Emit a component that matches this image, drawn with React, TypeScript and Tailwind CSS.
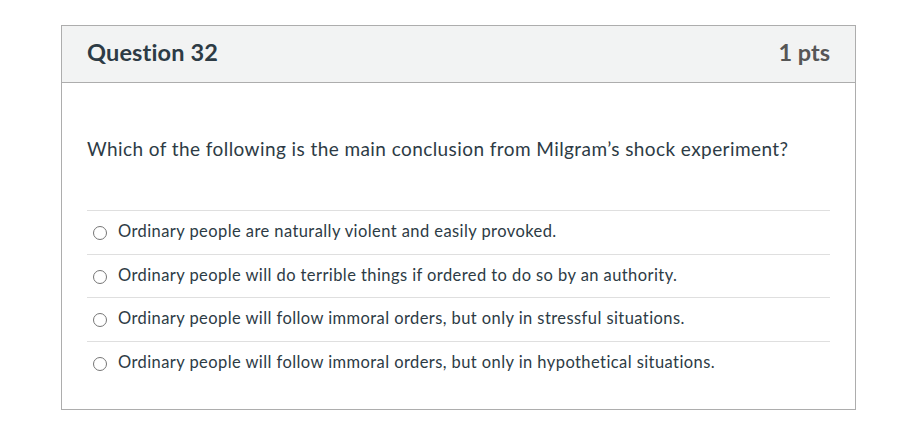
import React from "react";

const answers = [
  "Ordinary people are naturally violent and easily provoked.",
  "Ordinary people will do terrible things if ordered to do so by an authority.",
  "Ordinary people will follow immoral orders, but only in stressful situations.",
  "Ordinary people will follow immoral orders, but only in hypothetical situations.",
];

export default function App() {
  return (
    <main
      className="min-h-screen w-[904px] h-[432px] bg-white pt-[25px] pl-[61px]"
      style={{ fontFamily: "Lato, 'Noto Sans', sans-serif" }}
    >
      <div className="w-[795px] border border-[#adadad] text-[#2d3b45]">
        <div className="flex items-center justify-between h-[57px] pl-[25px] pr-[25px] pb-[3px] bg-[#f2f3f3] border-b border-[#adadad]">
          <h2 className="text-[23.5px] font-bold leading-none tracking-[0.15px]">Question 32</h2>
          <span className="text-[23.5px] font-bold leading-none text-[#565656]">1 pts</span>
        </div>
        <div className="px-[25px] pt-[52px] pb-[25px]">
          <p className="text-[19px] leading-[28px] mb-[47px] tracking-[0.42px]">
            Which of the following is the main conclusion from Milgram’s shock experiment?
          </p>
          <div>
            {answers.map((a) => (
              <label
                key={a}
                className="flex items-start border-t border-[#dfdfdf] pt-[9px] pb-[11px] text-[16.5px] leading-[22.5px] tracking-[0.42px] cursor-pointer"
              >
                <span className="mt-[6px] ml-[6px] mr-[11px] w-[14px] h-[14px] rounded-full border border-[#767676] bg-white shrink-0" />
                <span>{a}</span>
              </label>
            ))}
          </div>
        </div>
      </div>
    </main>
  );
}
